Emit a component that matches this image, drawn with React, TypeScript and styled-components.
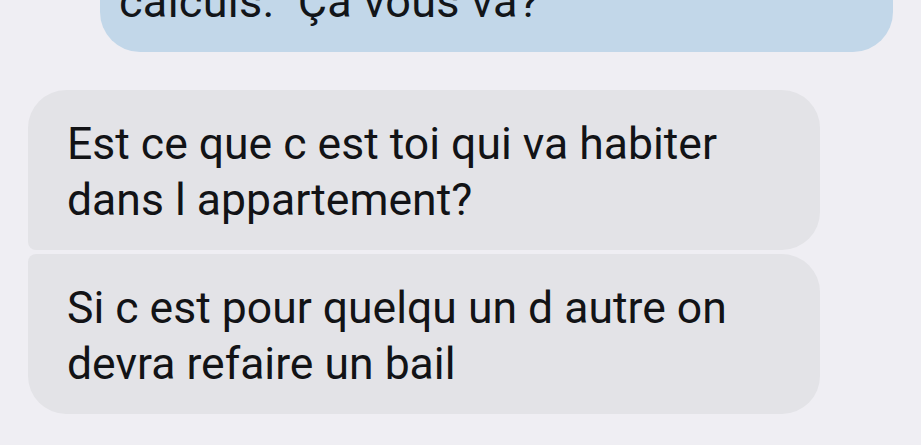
import React from "react";
import styled, { createGlobalStyle } from "styled-components";

const Global = createGlobalStyle`
  html, body {
    margin: 0;
    padding: 0;
    background: #efeef3;
    overflow: hidden;
  }
  body {
    font-family: Roboto, "Noto Sans", sans-serif;
  }
`;

const Thread = styled.div`
  width: 921px;
  height: 445px;
  overflow: hidden;
  display: flex;
  flex-direction: column;
  background: #efeef3;
`;

const OutRow = styled.div`
  display: flex;
  justify-content: flex-end;
  padding-right: 28px;
  margin-top: -52px;
  margin-bottom: 38px;
`;

const OutBubble = styled.div`
  width: 793px;
  box-sizing: border-box;
  background: #c2d7e9;
  color: #121519;
  border-radius: 40px;
  padding: 26px 30px 22px 19px;
  font-size: 45px;
  letter-spacing: 0.3px;
  line-height: 56px;
`;

const InGroup = styled.div`
  display: flex;
  flex-direction: column;
  gap: 4px;
  padding-left: 28px;
`;

const InBubble = styled.div<{ $pos: "first" | "last" }>`
  width: 792px;
  box-sizing: border-box;
  background: #e3e3e7;
  color: #121316;
  padding: 26px 30px 22px 39px;
  font-size: 44.5px;
  line-height: 56px;
  border-radius: ${(p) =>
    p.$pos === "first" ? "38px 38px 38px 8px" : "8px 38px 38px 38px"};
`;

export default function App() {
  return (
    <>
      <Global />
      <Thread>
        <OutRow>
          <OutBubble>calculs.&nbsp; Ça vous va?</OutBubble>
        </OutRow>
        <InGroup>
          <InBubble $pos="first">
            Est ce que c est toi qui va habiter dans l appartement?
          </InBubble>
          <InBubble $pos="last">
            Si c est pour quelqu un d autre on devra refaire un bail
          </InBubble>
        </InGroup>
      </Thread>
    </>
  );
}
